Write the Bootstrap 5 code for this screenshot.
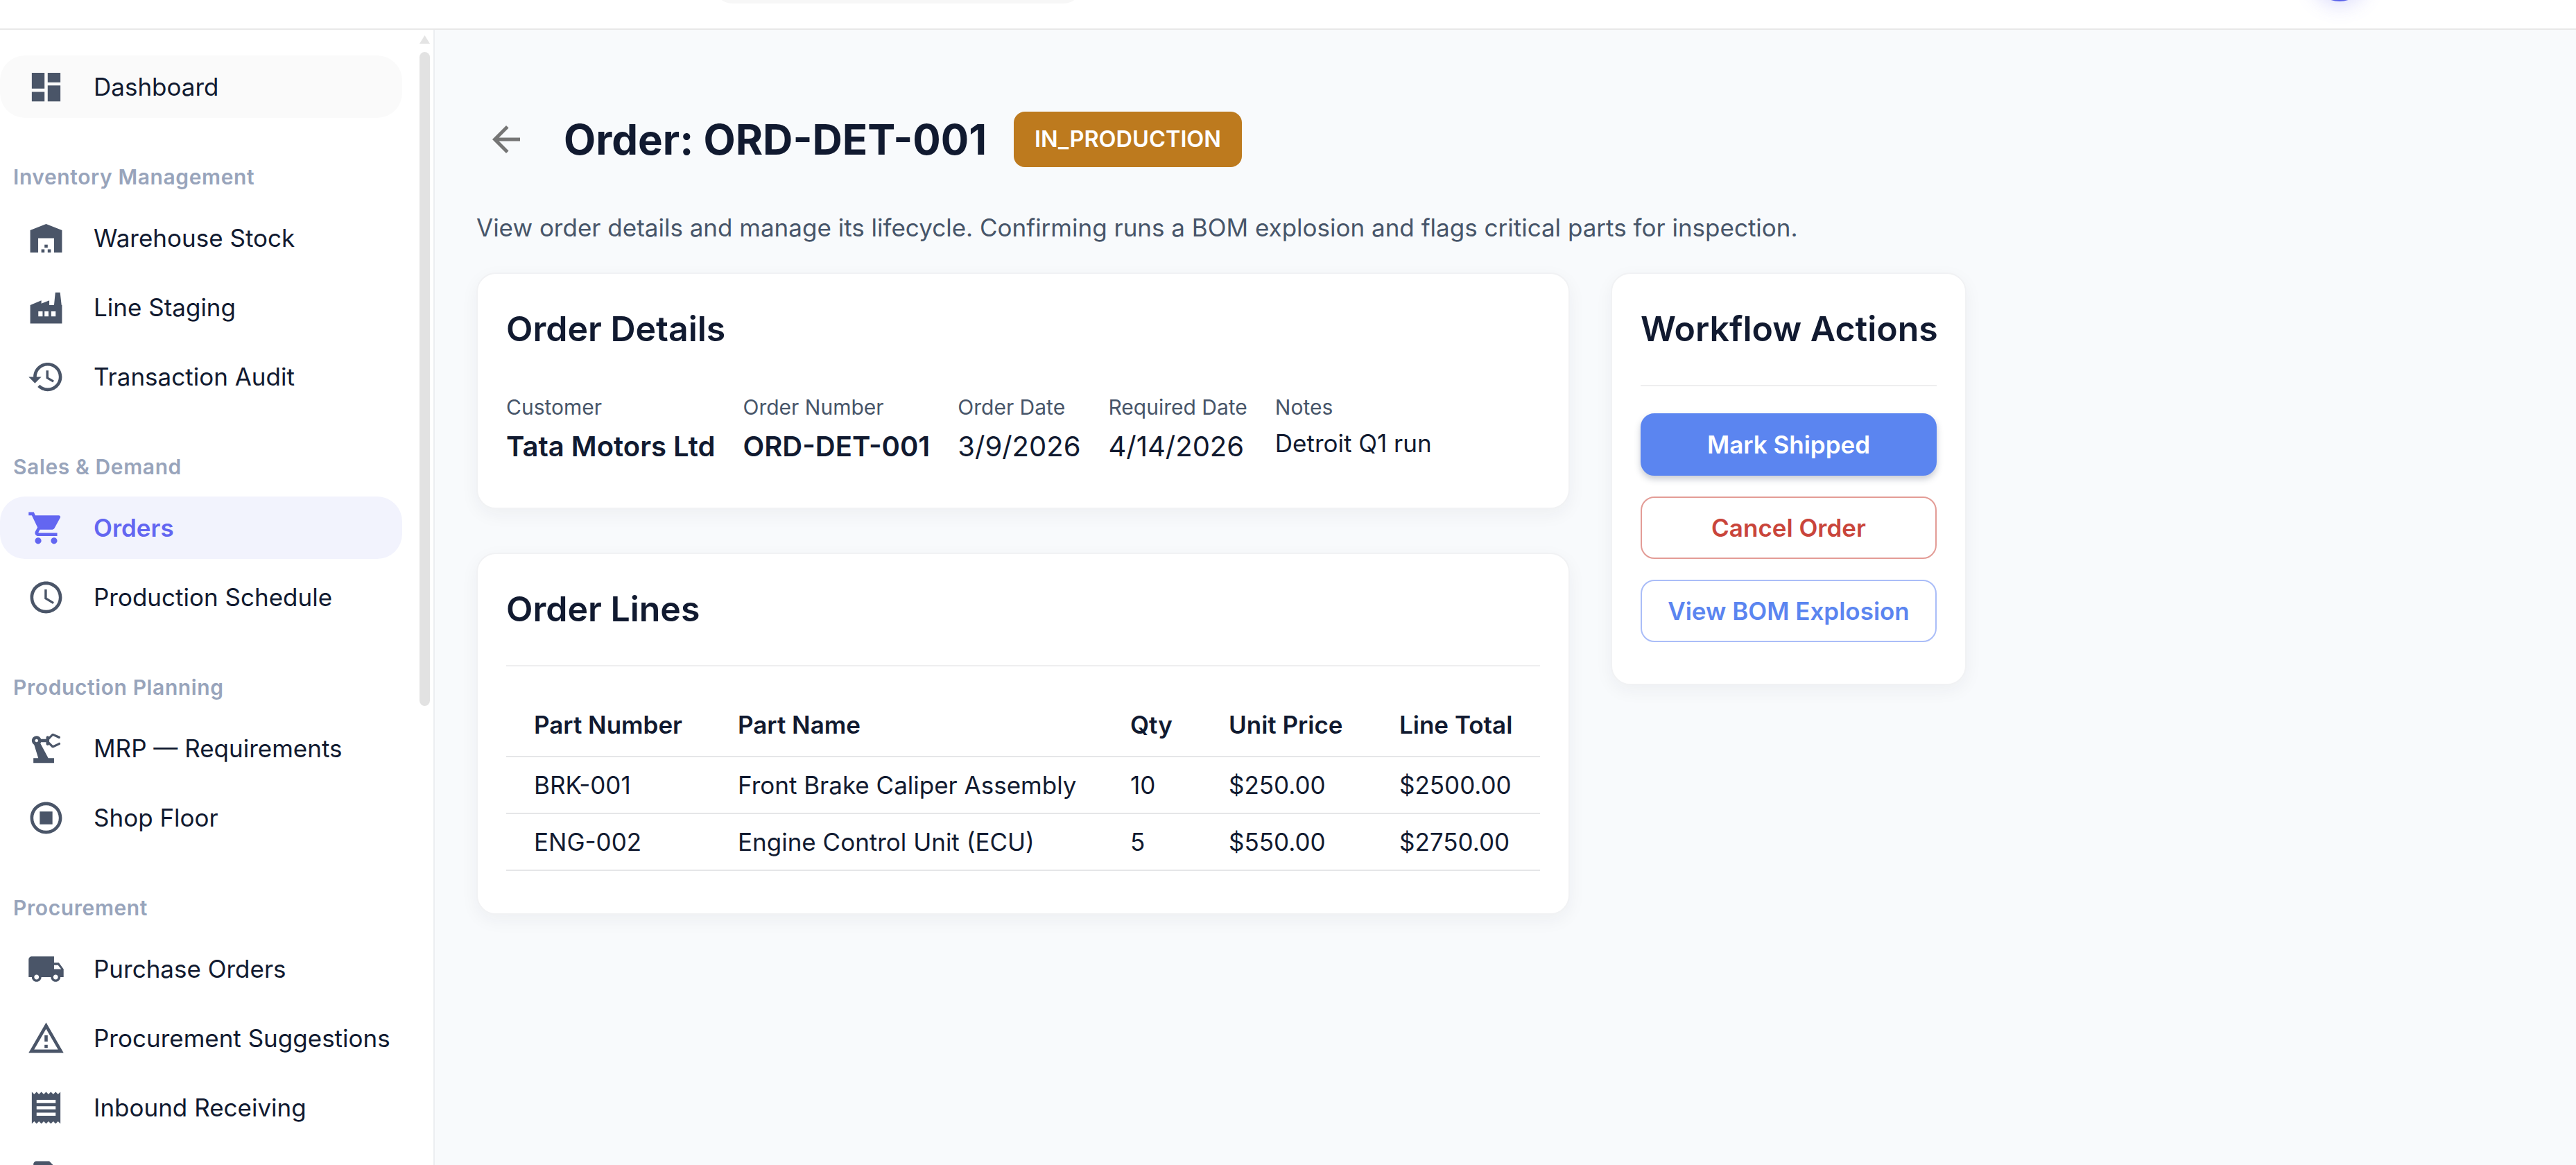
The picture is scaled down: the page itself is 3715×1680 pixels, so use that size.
<!DOCTYPE html>
<html lang="en">
<head>
    <meta charset="UTF-8">
    <title>Order: ORD-DET-001</title>
    <link href="https://cdn.jsdelivr.net/npm/bootstrap@5.3.3/dist/css/bootstrap.min.css" rel="stylesheet">
    <style>
        html { font-size: 35px; }
        body { font-family: Inter, "Liberation Sans", sans-serif; color: #111a30; background: #f8fafc; }

        .top-strip { height: 43px; background: #fff; border-bottom: 2px solid #e8e8e8; flex: none; position: relative; }
        .search-stub { position: absolute; left: 1027px; top: -60px; width: 536px; height: 65px; background: #f7f7f7; border-radius: 30px; }
        .avatar-stub { position: absolute; left: 3334px; top: -78px; width: 80px; height: 80px; border-radius: 50%; background: #5a62ea; box-shadow: 0 6px 28px rgba(99, 102, 241, .22); }

        .side-nav { width: 627px; flex: none; background: #fff; border-right: 2px solid #eceef1; padding-top: 37px; position: relative; overflow: hidden; }
        .scroll-arrow { position: absolute; left: 605px; top: 8px; width: 15px; height: 12px; background: #e4e4e4; clip-path: polygon(50% 0, 100% 100%, 0 100%); }
        .scroll-thumb { position: absolute; left: 605px; top: 32px; width: 15px; height: 943px; background: #e2e2e2; border-radius: 8px; }
        .side-link { display: flex; align-items: center; width: 580px; height: 90px; margin-bottom: 10px; padding: 0 0 0 39px; border-radius: 36px; color: #111a30; font-size: 35px; font-weight: 400; text-decoration: none; }
        .side-link svg { width: 55px; height: 55px; fill: #4a5568; flex: none; margin-right: 41px; }
        .side-link.is-home { background: #fafafa; }
        .side-link.is-active { background: #f2f3fd; color: #6366f1; font-weight: 600; }
        .side-link.is-active svg { fill: #6366f1; }
        .side-head { height: 44px; line-height: 44px; margin: 63px 0 21px 19px; color: #98a4bb; font-size: 30px; font-weight: 600; letter-spacing: .6px; }

        .order-main { padding: 118px 0 0 60px; }
        .order-head { height: 80px; margin-bottom: 60px; }
        .back-btn { width: 60px; height: 60px; margin: 0 53px 0 13px; fill: #757575; flex: none; }
        .order-title { font-size: 60px; font-weight: 700; line-height: 80px; margin: 0 39px 0 0; color: #111a30; }
        .state-pill { height: 80px; line-height: 80px; padding: 0 30px; border-radius: 16px; background: #bd7a1e; color: #fff; font-size: 32.5px; font-weight: 600; }
        .order-desc { color: #475569; line-height: 54px; margin: 0 0 38px; }

        .order-cols { gap: 59px; }
        .left-col { width: 1577px; gap: 63px; }
        .right-col { width: 513px; }
        .panel { border: 2px solid #f1f2f4; border-radius: 28px; background: #fff; box-shadow: 0 8px 26px rgba(30, 40, 60, .05); padding: 41px 41px; }
        .panel-title { font-size: 50px; font-weight: 600; line-height: 76px; margin: 0; color: #111a30; }
        .panel-rule { height: 2px; background: #eeeeef; border: 0; margin: 43px 0 0; opacity: 1; }

        .detail-row { gap: 40px; margin-top: 52px; padding-bottom: 19px; }
        .detail-label { font-size: 30px; line-height: 47px; color: #475569; }
        .detail-value { font-size: 40px; line-height: 57px; margin-top: 4px; }
        .detail-value.is-strong { font-weight: 600; }
        .detail-value.is-note { font-size: 35px; line-height: 48px; }

        .lines-table { width: 100%; table-layout: fixed; margin: 39px 0 20px; font-size: 35px; --bs-table-border-color: #e5e6e8; }
        .lines-table > :not(caption) > * > * { padding: 0 0 0 40px; border-bottom-width: 2px; color: #111a30; vertical-align: middle; }
        .lines-table thead th { height: 91px; font-weight: 600; }
        .lines-table tbody td { height: 82px; }
        .lines-table th:nth-child(1) { width: 294px; }
        .lines-table th:nth-child(2) { width: 566px; }
        .lines-table th:nth-child(3) { width: 142px; }
        .lines-table th:nth-child(4) { width: 246px; }

        .flow-btns { gap: 30px; margin: 39px 0 19px; }
        .flow-btn { height: 90px; border-radius: 20px; font-size: 35px; font-weight: 600; display: flex; align-items: center; justify-content: center; padding: 0; --bs-btn-border-width: 2px; }
        .flow-btn.is-main { background: #5b85f0; border-color: #5b85f0; color: #fff; box-shadow: 0 5px 10px rgba(40, 50, 80, .25); }
        .flow-btn.is-stop { background: #fff; border-color: #e39c96; color: #c9453b; }
        .flow-btn.is-bom { background: #fff; border-color: #aabdf8; color: #5b85f0; }
    </style>
</head>
<body class="d-flex flex-column vh-100 overflow-hidden">

<header class="top-strip overflow-hidden">
    <div class="search-stub"></div>
    <div class="avatar-stub"></div>
</header>

<div class="d-flex flex-grow-1 overflow-hidden">
    <aside class="side-nav">
        <a class="side-link is-home" href="#"><svg viewBox="0 0 24 24"><path d="M3 13h8V3H3v10zm0 8h8v-6H3v6zm10 0h8V11h-8v10zm0-18v6h8V3h-8z"/></svg>Dashboard</a>

        <div class="side-head">Inventory Management</div>
        <a class="side-link" href="#"><svg viewBox="0 0 24 24"><path d="M22 21V7L12 3 2 7v14h5v-9h10v9h5zm-11-2H9v2h2v-2zm2-3h-2v2h2v-2zm2 3h-2v2h2v-2z"/></svg>Warehouse Stock</a>
        <a class="side-link" href="#"><svg viewBox="0 0 24 24"><path fill-rule="evenodd" d="M22 22H2V10.5l7-3v2l5-2v3h3l.8-8h3l.9 8H22zM7.1 14.4v3.2h2.7v-3.2zM11 14.4v3.2h2.5v-3.2zM15.2 14.4v3.2H18v-3.2z"/></svg>Line Staging</a>
        <a class="side-link" href="#"><svg viewBox="0 0 24 24"><path d="M13 3c-4.97 0-9 4.03-9 9H1l3.89 3.89.07.14L9 12H6c0-3.87 3.13-7 7-7s7 3.13 7 7-3.13 7-7 7c-1.93 0-3.68-.79-4.94-2.06l-1.42 1.42C8.27 19.99 10.51 21 13 21c4.97 0 9-4.03 9-9s-4.03-9-9-9zm-1 5v5l4.28 2.54.72-1.21-3.5-2.08V8H12z"/></svg>Transaction Audit</a>

        <div class="side-head">Sales &amp; Demand</div>
        <a class="side-link is-active" href="#"><svg viewBox="0 0 24 24"><path d="M7 18c-1.1 0-1.99.9-1.99 2S5.9 22 7 22s2-.9 2-2-.9-2-2-2zM1 2v2h2l3.6 7.59-1.35 2.45c-.16.28-.25.61-.25.96 0 1.1.9 2 2 2h12v-2H7.42c-.14 0-.25-.11-.25-.25l.03-.12.9-1.63h7.45c.75 0 1.41-.41 1.75-1.03l3.58-6.49c.08-.14.12-.31.12-.48 0-.55-.45-1-1-1H5.21l-.94-2H1zm16 16c-1.1 0-1.99.9-1.99 2s.89 2 1.99 2 2-.9 2-2-.9-2-2-2z"/></svg>Orders</a>
        <a class="side-link" href="#"><svg viewBox="0 0 24 24"><path d="M11.99 2C6.47 2 2 6.48 2 12s4.47 10 9.99 10C17.52 22 22 17.52 22 12S17.52 2 11.99 2zM12 20c-4.42 0-8-3.58-8-8s3.58-8 8-8 8 3.58 8 8-3.58 8-8 8zm.5-13H11v6l5.25 3.15.75-1.23-4.5-2.67z"/></svg>Production Schedule</a>

        <div class="side-head">Production Planning</div>
        <a class="side-link" href="#"><svg viewBox="0 0 24 24"><path d="M19.93 8.35l-3.6 1.68L14 7.7V6.3l2.33-2.33 3.6 1.68c.38.18.82.01 1-.36.18-.38.01-.82-.36-1L16.65 2.6c-.38-.18-.83-.1-1.13.2l-1.74 1.74c-.18-.33-.44-.54-.78-.54-.55 0-1 .45-1 1v1H8.82C8.4 4.84 7.3 4 6 4 4.34 4 3 5.34 3 7c0 1.1.6 2.05 1.48 2.58L7.08 18H4v3h13v-3h-3.62L8.41 8.77c.17-.24.31-.49.41-.77H12v1c0 .55.45 1 1 1 .33 0 .6-.21.78-.54l1.74 1.74c.3.3.75.38 1.13.2l3.92-1.83c.38-.18.54-.62.36-1-.18-.37-.62-.54-1-.36zM6 8c-.55 0-1-.45-1-1s.45-1 1-1 1 .45 1 1-.45 1-1 1z"/></svg>MRP — Requirements</a>
        <a class="side-link" href="#"><svg viewBox="0 0 24 24"><path d="M12 2C6.48 2 2 6.48 2 12s4.48 10 10 10 10-4.48 10-10S17.52 2 12 2zm0 18c-4.42 0-8-3.58-8-8s3.58-8 8-8 8 3.58 8 8-3.58 8-8 8zM8 16h8V8H8v8z"/></svg>Shop Floor</a>

        <div class="side-head">Procurement</div>
        <a class="side-link" href="#"><svg viewBox="0 0 24 24"><path d="M20 8h-3V4H3c-1.1 0-2 .9-2 2v11h2c0 1.66 1.34 3 3 3s3-1.34 3-3h6c0 1.66 1.34 3 3 3s3-1.34 3-3h2v-5l-3-4zM6 18.5c-.83 0-1.5-.67-1.5-1.5s.67-1.5 1.5-1.5 1.5.67 1.5 1.5-.67 1.5-1.5 1.5zm13.5-9l1.96 2.5H17V9.5h2.5zm-1.5 9c-.83 0-1.5-.67-1.5-1.5s.67-1.5 1.5-1.5 1.5.67 1.5 1.5-.67 1.5-1.5 1.5z"/></svg>Purchase Orders</a>
        <a class="side-link" href="#"><svg viewBox="0 0 24 24"><path d="M12 5.99L19.53 19H4.47L12 5.99M12 2L1 21h22L12 2zm1 14h-2v2h2v-2zm0-6h-2v4h2v-4z"/></svg>Procurement Suggestions</a>
        <a class="side-link" href="#"><svg viewBox="0 0 24 24"><path d="M18 17H6v-2h12v2zm0-4H6v-2h12v2zm0-4H6V7h12v2zM3 22l1.5-1.5L6 22l1.5-1.5L9 22l1.5-1.5L12 22l1.5-1.5L15 22l1.5-1.5L18 22l1.5-1.5L21 22V2l-1.5 1.5L18 2l-1.5 1.5L15 2l-1.5 1.5L12 2l-1.5 1.5L9 2 7.5 3.5 6 2 4.5 3.5 3 2v20z"/></svg>Inbound Receiving</a>
        <a class="side-link" href="#"><svg viewBox="0 0 24 24"><path d="M14 2H6c-1.1 0-2 .9-2 2v16c0 1.1.9 2 2 2h12c1.1 0 2-.9 2-2V8l-6-6z"/></svg></a>

        <div class="scroll-arrow"></div>
        <div class="scroll-thumb"></div>
    </aside>

    <main class="order-main flex-grow-1">
        <div class="order-head d-flex align-items-center">
            <svg class="back-btn" viewBox="0 0 24 24"><path d="M20 11H7.83l5.59-5.59L12 4l-8 8 8 8 1.41-1.41L7.83 13H20v-2z"/></svg>
            <h1 class="order-title">Order: ORD-DET-001</h1>
            <span class="state-pill">IN_PRODUCTION</span>
        </div>
        <p class="order-desc">View order details and manage its lifecycle. Confirming runs a BOM explosion and flags critical parts for inspection.</p>

        <div class="order-cols d-flex align-items-start">
            <div class="left-col d-flex flex-column">
                <section class="panel">
                    <h2 class="panel-title">Order Details</h2>
                    <div class="detail-row d-flex">
                        <div><div class="detail-label">Customer</div><div class="detail-value is-strong">Tata Motors Ltd</div></div>
                        <div><div class="detail-label">Order Number</div><div class="detail-value is-strong">ORD-DET-001</div></div>
                        <div><div class="detail-label">Order Date</div><div class="detail-value">3/9/2026</div></div>
                        <div><div class="detail-label">Required Date</div><div class="detail-value">4/14/2026</div></div>
                        <div><div class="detail-label">Notes</div><div class="detail-value is-note">Detroit Q1 run</div></div>
                    </div>
                </section>

                <section class="panel">
                    <h2 class="panel-title">Order Lines</h2>
                    <hr class="panel-rule">
                    <table class="table lines-table">
                        <thead>
                            <tr><th>Part Number</th><th>Part Name</th><th>Qty</th><th>Unit Price</th><th>Line Total</th></tr>
                        </thead>
                        <tbody>
                            <tr><td>BRK-001</td><td>Front Brake Caliper Assembly</td><td>10</td><td>$250.00</td><td>$2500.00</td></tr>
                            <tr><td>ENG-002</td><td>Engine Control Unit (ECU)</td><td>5</td><td>$550.00</td><td>$2750.00</td></tr>
                        </tbody>
                    </table>
                </section>
            </div>

            <div class="right-col">
                <section class="panel">
                    <h2 class="panel-title text-nowrap">Workflow Actions</h2>
                    <hr class="panel-rule">
                    <div class="flow-btns d-flex flex-column">
                        <button class="btn flow-btn is-main" type="button">Mark Shipped</button>
                        <button class="btn flow-btn is-stop" type="button">Cancel Order</button>
                        <button class="btn flow-btn is-bom" type="button">View BOM Explosion</button>
                    </div>
                </section>
            </div>
        </div>
    </main>
</div>

</body>
</html>
